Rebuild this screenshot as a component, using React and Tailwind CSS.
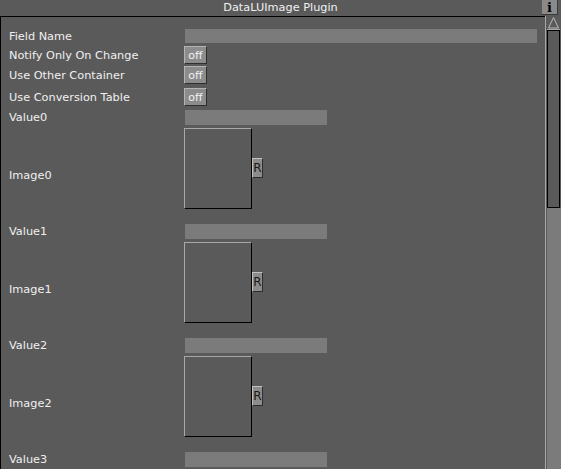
import React from "react";

const font = { fontFamily: '"DejaVu Sans", Verdana, sans-serif' };

const ToggleButton = ({ label = "off" }) => (
  <div className="w-[23px] h-[18px] bg-[#8c8c8c] border-t border-l border-[#b4b4b4] border-r border-b border-r-[#2e2e2e] border-b-[#2e2e2e] flex items-center justify-center text-[11px] leading-none text-[#f2f2f2]">
    {label}
  </div>
);

const LabelRow = ({ label, children, className = "" }) => (
  <div className={`flex items-center ${className}`}>
    <div className="w-[175px] text-[11.3px] leading-[13px] text-[#f0f0f0] whitespace-nowrap">{label}</div>
    {children}
  </div>
);

const ImageSlot = ({ index, showImage = true }) => (
  <>
    <LabelRow label={`Value${index}`} className="h-[15px] mt-[15px] first:mt-[4px]">
      <div className="ml-[1px] w-[142px] h-[15px] bg-[#7b7b7b]" />
    </LabelRow>
    {showImage && (
      <div className="flex mt-[3px]">
        <div className="w-[175px] pt-[41px] text-[11.3px] leading-[13px] text-[#f0f0f0]">Image{index}</div>
        <div className="w-[68px] h-[81px] border-t border-l border-[#a8a8a8] border-r border-b border-r-black border-b-black bg-[#5a5a5a]" />
        <div className="pt-[30px]">
          <div className="w-[11px] h-[20px] bg-[#8c8c8c] border-t border-l border-[#c0c0c0] border-r border-b border-r-[#2e2e2e] border-b-[#2e2e2e] flex items-center justify-center text-[12px] leading-none text-[#1a1a12]">
            R
          </div>
        </div>
      </div>
    )}
  </>
);

export default function App() {
  return (
    <div className="w-[561px] h-[469px] overflow-hidden bg-[#5a5a5a] flex flex-col select-none" style={font}>
      {/* title bar */}
      <div className="h-[16px] flex items-start shrink-0">
        <div className="w-[19px]" />
        <div className="flex-1 text-center text-[11.3px] leading-[15px] text-[#f0f0f0]">DataLUImage Plugin</div>
        <div className="w-[16px] h-[15px] bg-[#8a8a8a] border-r border-b border-[#3a3a3a] flex items-center justify-center">
          <span className="text-[13px] leading-[13px] font-bold text-black" style={{ fontFamily: '"DejaVu Serif", "Liberation Serif", serif' }}>
            i
          </span>
        </div>
        <div className="w-[3px]" />
      </div>

      <div className="flex-1 flex min-h-0">
        {/* panel */}
        <div className="flex-1 border-t border-l border-black pl-[8px] pt-[12px] overflow-hidden flex flex-col">
          <LabelRow label="Field Name" className="h-[14px]">
            <div className="ml-[1px] w-[352px] h-[14px] bg-[#7b7b7b]" />
          </LabelRow>
          <LabelRow label="Notify Only On Change" className="h-[18px] mt-[3px]">
            <ToggleButton />
          </LabelRow>
          <LabelRow label="Use Other Container" className="h-[18px] mt-[2px]">
            <ToggleButton />
          </LabelRow>
          <LabelRow label="Use Conversion Table" className="h-[18px] mt-[4px]">
            <ToggleButton />
          </LabelRow>
          <div className="flex flex-col">
            {[0, 1, 2, 3].map((i) => (
              <ImageSlot key={i} index={i} showImage={i < 3} />
            ))}
          </div>
        </div>

        {/* scrollbar */}
        <div className="w-[16px] border-l border-[#a8a8a8] pl-[1px] flex flex-col">
          <div className="w-[13px] h-[14px] border-b border-[#a8a8a8] flex items-start justify-center">
            <svg width="13" height="13" viewBox="0 0 13 13">
              <path d="M6.5 1.5 L1.5 12 L11.5 12 Z" fill="none" stroke="#b8b8b8" strokeWidth="1" />
            </svg>
          </div>
          <div className="w-[13px] h-[178px] border border-black bg-[#5a5a5a]" />
          <div className="w-[14px] flex-1 bg-[#7b7b7b]" />
        </div>
      </div>
    </div>
  );
}
